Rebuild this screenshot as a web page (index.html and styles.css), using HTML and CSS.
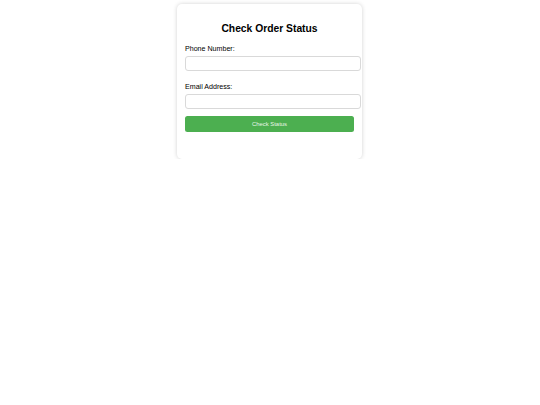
FILE: index.html
```html
<!DOCTYPE html>
<html>
<head>
<meta charset="utf-8">
<link rel="stylesheet" href="styles.css">
</head>
<body>
<div class="card">
  <h2 class="title">Check Order Status</h2>
  <form class="form">
    <label class="label" for="phone">Phone Number:</label>
    <input class="field" id="phone" type="text">
    <label class="label label-second" for="email">Email Address:</label>
    <input class="field" id="email" type="email">
    <button class="btn" type="button">Check Status</button>
  </form>
  <div class="result"></div>
</div>
</body>
</html>
```

FILE: styles.css
```css
html, body {
  margin: 0;
  padding: 0;
  background: #ffffff;
}
body {
  font-family: "Liberation Sans", Arial, sans-serif;
  color: #111;
}
.card {
  width: 169px;
  margin: 4px auto 0;
  padding: 8px;
  background: #fff;
  border-radius: 5px;
  box-shadow: 0 0 4px rgba(0, 0, 0, 0.18);
  height: 139px;
  box-sizing: content-box;
  position: relative;
  left: -0.5px;
}
.title {
  margin: 10px 0 0;
  font-size: 10.3px;
  line-height: 14px;
  font-weight: bold;
  text-align: center;
  color: #000;
}
.form {
  display: flex;
  flex-direction: column;
  align-items: flex-start;
}
.label {
  display: block;
  margin-top: 8px;
  font-size: 7.1px;
  line-height: 10px;
  color: #000;
}
.label-second {
  margin-top: 11.5px;
}
.field {
  box-sizing: border-box;
  width: 176px;
  height: 15px;
  margin: 1.5px 0 0;
  padding: 2px 3px;
  border: 1px solid #d9d9d9;
  border-radius: 3px;
  background: #fff;
  font-size: 7px;
}
.btn {
  margin-top: 7px;
  width: 169px;
  height: 16px;
  padding: 0;
  border: none;
  border-radius: 2.5px;
  background: #4caf50;
  color: #e8f5e8;
  font-family: "Liberation Sans", Arial, sans-serif;
  font-size: 5.9px;
  line-height: 16px;
  text-align: center;
}
```
